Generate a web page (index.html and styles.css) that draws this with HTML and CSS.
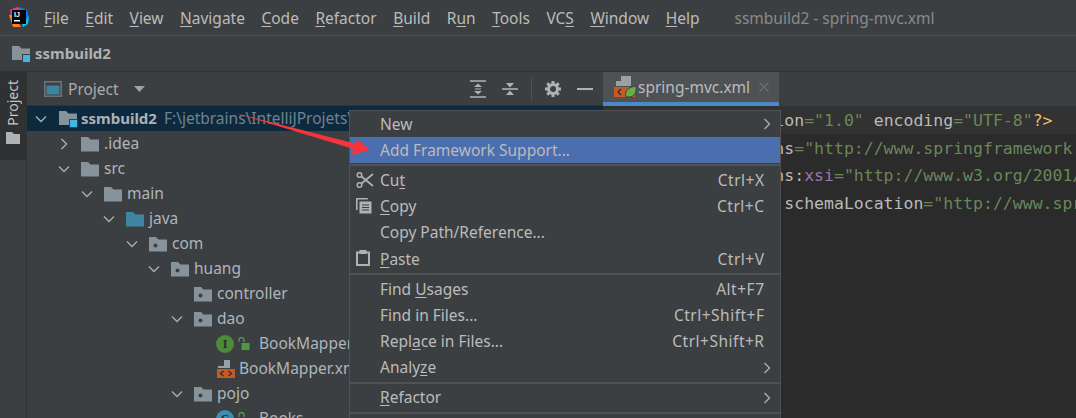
FILE: index.html
```html
<!DOCTYPE html>
<html lang="en">
<head>
<meta charset="utf-8">
<title>ssmbuild2 - spring-mvc.xml</title>
<link rel="stylesheet" href="styles.css">
</head>
<body>
<svg class="defs" width="0" height="0" aria-hidden="true">
  <defs>
    <symbol id="folder" viewBox="0 0 18 16"><path d="M0 1h7l2.500 2.500H18V15.500H0z" fill="#87939a"/></symbol>
    <symbol id="pkg" viewBox="0 0 18 16"><path d="M0 1h7l2.500 2.500H18V15.500H0z" fill="#87939a"/><circle cx="6.500" cy="9.500" r="2" fill="#3c3f41"/></symbol>
    <symbol id="src" viewBox="0 0 18 16"><path d="M0 1h7l2.500 2.500H18V15.500H0z" fill="#3e86a0"/></symbol>
    <symbol id="module" viewBox="0 0 26 18"><path d="M0 1h7l2.500 2.500H18V15H0z" fill="#87939a"/><rect x="10.500" y="9.500" width="8" height="8" fill="#3592c4" stroke="#3c3f41"/><rect x="11" y="10" width="7" height="7" fill="#40b6e0"/></symbol>
    <symbol id="down" viewBox="0 0 16 16"><path d="M3 5.500 8 10.500 13 5.500" fill="none" stroke="#a8adb0" stroke-width="1.400"/></symbol>
    <symbol id="right" viewBox="0 0 16 16"><path d="M5.500 3 10.500 8 5.500 13" fill="none" stroke="#a8adb0" stroke-width="1.400"/></symbol>
    <symbol id="xmlfile" viewBox="0 0 20 20"><path d="M8 1h6v8H2V7h6z" fill="#9aa0a4"/><rect x="1" y="10" width="18" height="9" fill="#c75a22"/><path d="M7.500 12 4.500 14.500 7.500 17M12.500 12 15.500 14.500 12.500 17" fill="none" stroke="#2b2b2b" stroke-width="1.200"/></symbol>
  </defs>
</svg>

<div class="app">
  <header class="titlebar">
    <svg class="logo" width="20" height="20" viewBox="0 0 20 20">
      <path d="M1 3 8 0 12 2 9 8 2 12z" fill="#f7367a"/>
      <path d="M10 0 18 3 20 11 15 12z" fill="#087cfa"/>
      <path d="M0 8 4 20 12 20 5 8z" fill="#fd8224"/>
      <path d="M13 17 20 9 19 17 14 20z" fill="#07c3f2"/>
      <rect x="3" y="3" width="14" height="14" fill="#000"/>
      <text class="logo-text" x="5" y="10">IJ</text>
      <rect x="5" y="13" width="6" height="1.500" fill="#fff"/>
    </svg>
    <nav class="menubar">
      <span><u>F</u>ile</span><span><u>E</u>dit</span><span><u>V</u>iew</span><span><u>N</u>avigate</span><span><u>C</u>ode</span><span><u>R</u>efactor</span><span><u>B</u>uild</span><span>R<u>u</u>n</span><span><u>T</u>ools</span><span>VC<u>S</u></span><span><u>W</u>indow</span><span><u>H</u>elp</span>
    </nav>
    <div class="wintitle">ssmbuild2 - spring-mvc.xml</div>
  </header>

  <div class="crumbs">
    <svg class="i-module" width="26" height="18"><use href="#module"/></svg>
    <strong>ssmbuild2</strong>
  </div>

  <div class="main">
    <aside class="strip">
      <div class="strip-tab">
        <span class="strip-label">Project</span>
        <svg width="14" height="12" viewBox="0 0 14 12"><path d="M0 0h6l2 2h6v10H0z" fill="#afb1b3"/></svg>
      </div>
    </aside>

    <section class="panel">
      <div class="panel-head">
        <svg class="panel-ic" width="18" height="16" viewBox="0 0 18 16"><rect x=".8" y=".8" width="16.400" height="14.400" fill="none" stroke="#6e7275" stroke-width="1.600"/><rect x="2.500" y="4.500" width="13" height="9" fill="#3d84a0"/></svg>
        <span class="panel-name">Project</span>
        <svg class="caret" width="11" height="6" viewBox="0 0 11 6"><path d="M0 0h11L5.500 6z" fill="#a0a3a5"/></svg>
        <div class="panel-tools">
          <svg width="16" height="18" viewBox="0 0 16 18"><path d="M0 1h16M0 17h16" stroke="#afb1b3" stroke-width="1.600"/><path d="M8 3.500 12 7H4zM8 14.500 4 11H12z" fill="#afb1b3"/><path d="M5 9h6" stroke="#afb1b3"/></svg>
          <svg width="16" height="18" viewBox="0 0 16 18"><path d="M0 9h16" stroke="#afb1b3" stroke-width="1.600"/><path d="M8 7.500 4 3H12zM8 10.500 12 15H4z" fill="#afb1b3"/></svg>
          <i class="vsep"></i>
          <svg width="16" height="16" viewBox="0 0 16 16"><circle cx="8" cy="8" r="4.500" fill="none" stroke="#afb1b3" stroke-width="3"/><path d="M8 0v3M8 13v3M0 8h3M13 8h3M2.300 2.300l2.100 2.100M11.600 11.600l2.100 2.100M2.300 13.700l2.100-2.100M11.600 4.400l2.100-2.100" stroke="#afb1b3" stroke-width="3"/></svg>
          <i class="minus"></i>
        </div>
      </div>

      <div class="tree">
        <div class="row d0 selected"><svg class="chev"><use href="#down"/></svg><svg class="ic-mod"><use href="#module"/></svg><strong>ssmbuild2</strong><span class="path">F:\jetbrains\IntelliJProjets\ssmbuild2</span></div>
        <div class="row d1"><svg class="chev"><use href="#right"/></svg><svg class="ic"><use href="#folder"/></svg>.idea</div>
        <div class="row d1"><svg class="chev"><use href="#down"/></svg><svg class="ic"><use href="#folder"/></svg>src</div>
        <div class="row d2"><svg class="chev"><use href="#down"/></svg><svg class="ic"><use href="#folder"/></svg>main</div>
        <div class="row d3"><svg class="chev"><use href="#down"/></svg><svg class="ic"><use href="#src"/></svg>java</div>
        <div class="row d4"><svg class="chev"><use href="#down"/></svg><svg class="ic"><use href="#pkg"/></svg>com</div>
        <div class="row d5"><svg class="chev"><use href="#down"/></svg><svg class="ic"><use href="#pkg"/></svg>huang</div>
        <div class="row d6"><span class="chev"></span><svg class="ic"><use href="#pkg"/></svg>controller</div>
        <div class="row d6"><svg class="chev"><use href="#down"/></svg><svg class="ic"><use href="#pkg"/></svg>dao</div>
        <div class="row leaf">
          <span class="badge b-i">I</span>
          <svg class="lock" width="12" height="14" viewBox="0 0 12 14"><path d="M1 5V3a2.500 2.500 0 0 1 5 0v2" fill="none" stroke="#5a9a48" stroke-width="1.300"/><rect x="3.500" y="6" width="8" height="7" fill="#4e9a3c"/></svg>
          BookMapper
        </div>
        <div class="row leaf"><svg class="ic-xml"><use href="#xmlfile"/></svg>BookMapper.xml</div>
        <div class="row d6"><svg class="chev"><use href="#down"/></svg><svg class="ic"><use href="#pkg"/></svg>pojo</div>
        <div class="row leaf">
          <span class="badge b-c">C</span>
          <svg class="lock" width="12" height="14" viewBox="0 0 12 14"><path d="M1 5V3a2.500 2.500 0 0 1 5 0v2" fill="none" stroke="#5a9a48" stroke-width="1.300"/><rect x="3.500" y="6" width="8" height="7" fill="#4e9a3c"/></svg>
          Books
        </div>
      </div>
    </section>

    <section class="editor">
      <div class="tabs">
        <div class="tab">
          <svg width="24" height="24" viewBox="0 0 24 24"><path d="M7 1h10v10H2V6h5z" fill="#9aa0a4"/><rect x="0" y="12" width="21" height="10" fill="#c75a22"/><path d="M7 14 4 17l3 3" fill="none" stroke="#2b2b2b" stroke-width="1.200"/><path d="M12 22C10 15 15 12 22 11c1 7-2 11-7 11z" fill="#6aab43" stroke="#3c3f41"/></svg>
          <span>spring-mvc.xml</span>
          <svg class="tab-x" width="10" height="10" viewBox="0 0 10 10"><path d="M.5.500l9 9M9.500.500l-9 9" stroke="#6e7275" stroke-width="1.200"/></svg>
        </div>
        <div class="tabs-rest"></div>
      </div>
      <div class="code">
        <div class="line current"><span class="pi">&lt;?xml</span> version<span class="str">="1.0"</span> encoding<span class="str">="UTF-8"</span><span class="pi">?&gt;</span></div>
        <div class="line">&lt;beans xmlns<span class="str">="http://www.springframework.org/schema/beans"</span></div>
        <div class="line">       xmlns:<span class="ns">xsi</span><span class="str">="http://www.w3.org/2001/XMLSchema-instance"</span></div>
        <div class="line">       xsi:schemaLocation<span class="str">="http://www.springframework.org/schema/beans"</span></div>
      </div>
    </section>
  </div>

  <div class="ctx">
    <div class="mi"><span class="lbl">New</span><svg class="sub"><use href="#right"/></svg></div>
    <div class="mi active"><span class="lbl">Add Framework Support...</span></div>
    <hr>
    <div class="mi">
      <svg class="mi-ic" width="18" height="18" viewBox="0 0 18 18"><circle cx="3.500" cy="4" r="2.300" fill="none" stroke="#afb1b3" stroke-width="1.500"/><circle cx="3.500" cy="14" r="2.300" fill="none" stroke="#afb1b3" stroke-width="1.500"/><path d="M5.500 5.500 17 15M5.500 12.500 17 3" stroke="#afb1b3" stroke-width="1.700"/></svg>
      <span class="lbl">Cu<u>t</u></span><span class="key">Ctrl+X</span></div>
    <div class="mi">
      <svg class="mi-ic" width="16" height="16" viewBox="0 0 16 16"><path d="M.8 12V.8h11" fill="none" stroke="#afb1b3" stroke-width="1.600"/><rect x="3.500" y="3.500" width="12" height="12" fill="#afb1b3"/><path d="M6 7h7M6 9.500h7M6 12h7" stroke="#3c3f41" stroke-width="1.200"/></svg>
      <span class="lbl"><u>C</u>opy</span><span class="key">Ctrl+C</span></div>
    <div class="mi"><span class="lbl">Copy Path/Reference...</span></div>
    <div class="mi">
      <svg class="mi-ic" width="14" height="16" viewBox="0 0 14 16"><rect x="1" y="2.500" width="12" height="12.500" fill="none" stroke="#afb1b3" stroke-width="2"/><rect x="3.500" y="0" width="7" height="4" fill="#afb1b3"/></svg>
      <span class="lbl"><u>P</u>aste</span><span class="key">Ctrl+V</span></div>
    <hr>
    <div class="mi"><span class="lbl">Find <u>U</u>sages</span><span class="key">Alt+F7</span></div>
    <div class="mi"><span class="lbl">Find in Files...</span><span class="key">Ctrl+Shift+F</span></div>
    <div class="mi"><span class="lbl">Repl<u>a</u>ce in Files...</span><span class="key">Ctrl+Shift+R</span></div>
    <div class="mi"><span class="lbl">Analy<u>z</u>e</span><svg class="sub"><use href="#right"/></svg></div>
    <hr>
    <div class="mi"><span class="lbl"><u>R</u>efactor</span><svg class="sub"><use href="#right"/></svg></div>
    <hr>
  </div>

  <svg class="arrow" width="145" height="52" viewBox="230 108 145 52"><path d="M235 113 355 143.500 358 140 370 150 351 155 353.500 149z" fill="#f5353a"/></svg>
</div>
</body>
</html>
```

FILE: styles.css
```css
* { box-sizing: border-box; }
html, body { margin: 0; padding: 0; }
body {
  width: 1076px;
  height: 418px;
  overflow: hidden;
  background: #3c3f41;
  color: #bbbbbb;
  font: 15.500px/25px "Noto Sans", "Open Sans", sans-serif;
}
.defs { position: absolute; }
svg { display: block; flex: none; }
u { text-underline-offset: 2px; text-decoration-thickness: 1px; }
.app { position: relative; width: 1076px; height: 418px; overflow: hidden; display: flex; flex-direction: column; }

.titlebar {
  height: 36px;
  flex: none;
  display: flex;
  align-items: center;
  border-bottom: 1px solid #515151;
  padding: 1px 0 0 9px;
}
.logo { margin: -2px 15px 0 0; }
.logo-text { font: bold 7px "Liberation Sans", sans-serif; fill: #fff; }
.menubar { display: flex; gap: 16.500px; }
.wintitle { margin-left: 35px; color: #8a8a8a; }

.crumbs {
  height: 36px;
  flex: none;
  display: flex;
  align-items: center;
  padding-left: 12px;
  border-bottom: 1px solid #323232;
}
.crumbs strong, .row strong { font-size: 15px; font-weight: 700; color: #afb1b3; }
.i-module { width: 26px; margin-right: -3px; }

.main { flex: 1; display: flex; min-height: 0; }
.strip { width: 27px; flex: none; border-right: 1px solid #323232; }
.strip-tab {
  height: 88px;
  background: #2f3133;
  display: flex;
  flex-direction: column;
  align-items: center;
  gap: 6px;
  padding-top: 8px;
}
.strip-label { writing-mode: vertical-rl; transform: rotate(180deg); font-size: 14px; line-height: 16px; color: #c4c4c4; }

.panel { width: 576px; flex: none; display: flex; flex-direction: column; overflow: hidden; }
.panel-head { height: 34px; flex: none; display: flex; align-items: center; padding: 1px 0 0 17px; border-bottom: 1px solid #323232; }
.panel-name { margin-left: 6px; color: #a9abad; }
.caret { margin-left: 15px; }
.panel-tools { margin-left: auto; display: flex; align-items: center; gap: 16px; padding-right: 10px; }
.vsep { width: 1px; height: 24px; background: #515151; margin: 0 -3px; }
.minus { width: 16px; height: 2px; background: #afb1b3; }

.tree { flex: 1; overflow: hidden; }
.row { height: 25px; display: flex; align-items: center; white-space: nowrap; color: #aeb5bb; }
.row.selected { background: #0d293e; }
.d0 { padding-left: 6px; }
.d1 { padding-left: 29px; }
.d2 { padding-left: 52px; }
.d3 { padding-left: 74px; }
.d4 { padding-left: 97px; }
.d5 { padding-left: 119px; }
.d6 { padding-left: 142px; }
.leaf { padding-left: 189px; }
.chev { width: 16px; height: 16px; margin-right: 9px; flex: none; }
.ic { width: 18px; height: 16px; margin-right: 5px; }
.ic-mod { width: 26px; height: 18px; margin: 0 -4px 0 1px; }
.path { margin-left: 7px; color: #71828f; }
.badge { width: 18px; height: 18px; border-radius: 50%; font: bold 12px/18px "Liberation Serif", serif; text-align: center; color: #2b2b2b; }
.b-i { background: #4e8a3c; }
.b-c { background: #3d8eb0; }
.lock { margin: 0 9px 0 4px; }
.ic-xml { width: 20px; height: 20px; margin-right: 3px; }

.editor { flex: 1; min-width: 0; display: flex; flex-direction: column; background: #2b2b2b; }
.tabs { height: 34px; flex: none; display: flex; background: #3c3f41; }
.tab { width: 176px; display: flex; align-items: center; background: #4e5254; border-bottom: 4px solid #4a88c7; padding: 0 0 0 11px; color: #bbbbbb; flex: none; }
.tab-x { margin-left: 9px; }
.tabs-rest { flex: 1; }
.code { font: 16.500px/27.500px "DejaVu Sans Mono", "Liberation Mono", monospace; color: #bababa; overflow: hidden; flex: 1; }
.line { padding: 1px 0 0 72px; height: 27.500px; white-space: pre; }
.line.current { background: #323232; }
.str { color: #6a8759; }
.pi { color: #e8bf6a; }
.ns { color: #9876aa; }

.ctx {
  position: absolute;
  left: 349px;
  top: 110px;
  width: 432px;
  height: 320px;
  background: #3c3f41;
  border: 1px solid #515151;
  color: #bbbbbb;
}
.mi { position: relative; height: 26.200px; display: flex; align-items: center; padding: 0 16px 0 30px; justify-content: space-between; }
.mi.active { background: #4b6eaf; }
.ctx hr { height: 4px; margin: 0; border: 0; border-top: 1px solid #3c3f41; border-bottom: 1px solid #3c3f41; background: #515151; }
.mi-ic { position: absolute; left: 6px; top: 4px; }
.sub { position: absolute; right: 5px; top: 5px; width: 16px; height: 16px; }
.key { letter-spacing: .5px; margin-right: -.5px; }

.arrow { position: absolute; left: 230px; top: 108px; }
```
